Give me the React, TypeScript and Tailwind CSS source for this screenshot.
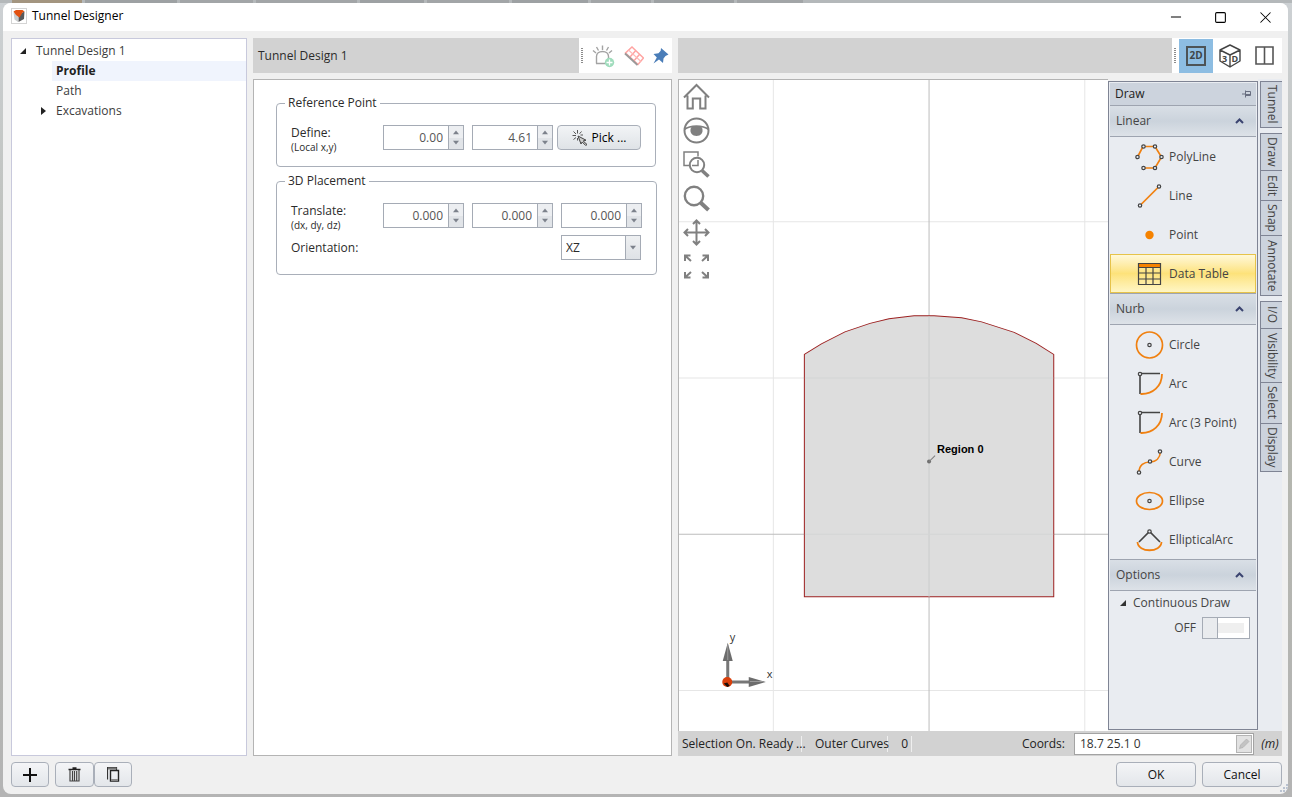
import type { ReactNode } from "react";
import { Minus, Square, X } from "lucide-react";

const ORANGE = "#f08010";
const INK = "#444444";

/** Small filled triangle used by spinners, drop-downs and tree nodes */
function Triangle({ points, className }: { points: string; className: string }) {
  return (
    <svg className={className} viewBox="0 0 8 8" aria-hidden="true">
      <polygon points={points} fill="currentColor" />
    </svg>
  );
}

/* ---------- Window frame ---------- */

const backdropTabs = [
  "w-[70px] bg-[#a39580]",
  "w-[92px] bg-[#9da1a3]",
  "w-[73px] bg-[#a2a5a7]",
  "w-[101px] bg-[#a2a5a7]",
  "w-[64px] bg-[#9da1a3]",
  "w-[82px] bg-[#a2a5a7]",
  "w-[76px] bg-[#9da1a3]",
  "w-[60px] bg-[#a2a5a7]",
  "w-[80px] bg-[#9da1a3]",
  "w-[66px] bg-[#a2a5a7]",
];

function BackdropStrip() {
  return (
    <div className="flex h-[3px] shrink-0 gap-[3px] bg-[#b4b8ba] pl-3">
      {backdropTabs.map((tab, i) => (
        <div className={tab} key={i} />
      ))}
    </div>
  );
}

function TitleBar() {
  return (
    <header className="flex h-7 shrink-0 items-center justify-between bg-white pl-2">
      <div className="flex items-center gap-[5px] pb-[2px]">
        <svg className="size-4" viewBox="0 0 16 16" aria-hidden="true">
          <rect x="0.5" y="0.5" width="15" height="15" fill="#fff" stroke="#d4d4d4" />
          <path d="M2.5 4 7 6v8L3.5 11.500z" fill="#c9cccd" />
          <path d="M13.500 3.500 7.500 6.500V14L13 11z" fill="#58595b" />
          <path d="M2.500 3.500 5 2h6.500l2 1.500-2 1L8.500 9.500 5 7z" fill="#e2500f" />
        </svg>
        <h1 className="text-xs text-black">Tunnel Designer</h1>
      </div>
      <div className="flex text-black">
        <button aria-label="Minimize" className="flex h-7 w-[45px] items-center justify-center" type="button">
          <Minus size={16} strokeWidth={1.5} />
        </button>
        <button aria-label="Maximize" className="flex h-7 w-[45px] items-center justify-center" type="button">
          <Square size={13} strokeWidth={2} />
        </button>
        <button aria-label="Close" className="flex h-7 w-[45px] items-center justify-center" type="button">
          <X size={19} strokeWidth={1.3} />
        </button>
      </div>
    </header>
  );
}

/* ---------- Tree ---------- */

function DesignTree() {
  return (
    <nav
      aria-label="Design tree"
      className="w-[236px] shrink-0 border border-[#c8c9dc] bg-white pt-px text-[#3c3c3c]"
    >
      <button className="flex h-[21px] w-full items-center gap-[9px] pl-[7px]" type="button">
        <Triangle className="size-2 text-[#222]" points="7,1 7,7 1,7" />
        Tunnel Design 1
      </button>
      <div className="pl-10">
        <button
          className="flex h-5 w-full items-center bg-[#f0f4fd] pl-1 font-bold text-[#222]"
          type="button"
        >
          Profile
        </button>
      </div>
      <button className="flex h-5 w-full items-center pl-11" type="button">
        Path
      </button>
      <button className="flex h-5 w-full items-center gap-2 pl-7" type="button">
        <Triangle className="size-2 text-[#222]" points="1,0 6,4 1,8" />
        Excavations
      </button>
    </nav>
  );
}

/* ---------- Properties ---------- */

function Grip() {
  return (
    <svg className="h-4 w-[2px] shrink-0" viewBox="0 0 2 16" aria-hidden="true">
      <path d="M1 0V16" stroke="#8c8c8c" strokeWidth="2" strokeDasharray="1 1" />
    </svg>
  );
}

function AddSupportIcon() {
  return (
    <svg className="h-6 w-[23px]" viewBox="0 0 23 24" fill="none" aria-hidden="true">
      <path d="M4.500 19.500V12.500C4.500 9.500 7 7.500 10.500 7.500S16.500 9.500 16.500 12.500V16M4 19.500h9" stroke="#a3a3a3" strokeWidth="1.400" />
      <path d="M1 6.500 4 9M4.500 3l2 3.500M10.500 1.500v4.500M16.500 3l-2 3.500M20 6.500 17 9" stroke="#a3a3a3" strokeWidth="1.400" />
      <circle cx="17.500" cy="18.500" r="4.700" fill="#9fdcbc" />
      <path d="M14.500 18.500h6M17.500 15.500v6" stroke="#fff" strokeWidth="1.300" />
    </svg>
  );
}

function BoltLayoutIcon() {
  return (
    <svg className="size-5" viewBox="0 0 20 20" fill="none" aria-hidden="true">
      <path d="M8 1 19.500 12 14 18.500 1.500 7zM11.800 4.600 6 11M15.600 8.300 10 14.800" stroke="#ffa3a1" strokeWidth="1.500" />
      <path d="M4.500 4 17 15.500" stroke="#ffb8b6" strokeWidth="1.100" />
      <path d="M1 7.500 13.500 19" stroke="#999" strokeWidth="1.800" />
    </svg>
  );
}

function PushPinIcon() {
  return (
    <svg className="size-4" viewBox="0 0 16 16" aria-hidden="true">
      <path d="M8 0 15.500 6.500 12.500 8 10.500 10.500 10 15 6 11.500 0.500 15.500 3.800 9.500 0.500 6 5.500 5.300 7.700 2.700z" fill="#4a7db8" />
    </svg>
  );
}

function NumberField({ label, value }: { label: string; value: string }) {
  return (
    <div className="flex h-[25px] w-[81px] border border-[#a5abb5] bg-white">
      <input
        aria-label={label}
        className="w-full min-w-0 pr-[5px] text-right text-[#555] outline-none"
        defaultValue={value}
        inputMode="decimal"
        type="text"
      />
      <div className="flex w-[15px] shrink-0 flex-col border-l border-[#a5abb5]">
        <button
          aria-label={`Increase ${label}`}
          className="flex flex-1 items-center justify-center bg-[#eceef1] text-[#7d828c]"
          type="button"
        >
          <Triangle className="size-[6px]" points="0,7 4,2 8,7" />
        </button>
        <button
          aria-label={`Decrease ${label}`}
          className="flex flex-1 items-center justify-center bg-[#e1e4e8] text-[#7d828c]"
          type="button"
        >
          <Triangle className="size-[6px]" points="0,1 8,1 4,6" />
        </button>
      </div>
    </div>
  );
}

function FieldCaption({ title, note }: { title: string; note: string }) {
  return (
    <div className="w-[84px] leading-[15px]">
      <div>{title}</div>
      <div className="text-[10px]">{note}</div>
    </div>
  );
}

function PropertiesPanel() {
  return (
    <section className="flex w-[419px] shrink-0 flex-col gap-[6px]">
      <div className="flex h-[35px] bg-[#d2d2d2]">
        <h2 className="flex flex-1 items-center pl-[5px]">Tunnel Design 1</h2>
        <div className="flex w-[93px] items-center gap-[9px] bg-white pl-[2px]">
          <Grip />
          <button aria-label="Add support" type="button">
            <AddSupportIcon />
          </button>
          <button aria-label="Bolt layout" type="button">
            <BoltLayoutIcon />
          </button>
          <button aria-label="Pin panel" type="button">
            <PushPinIcon />
          </button>
        </div>
      </div>

      <div className="flex flex-1 flex-col gap-[6px] border border-[#b4b4b4] bg-white px-[22px] pt-[15px]">
        <fieldset className="rounded border border-[#a9afb9] px-[14px] pt-[14px] pb-[11px]">
          <legend className="-ml-[6px] px-[3px] leading-4">Reference Point</legend>
          <div className="flex items-start gap-2">
            <FieldCaption note="(Local x,y)" title="Define:" />
            <NumberField label="Local x" value="0.00" />
            <div className="flex gap-1">
              <NumberField label="Local y" value="4.61" />
              <button
                className="flex h-[25px] w-[84px] items-center justify-center gap-1 rounded border border-[#a9afb9] bg-linear-to-b from-[#f2f4f6] to-[#dfe3e7] text-black"
                type="button"
              >
                <svg className="size-4" viewBox="0 0 16 16" fill="none" aria-hidden="true">
                  <path d="M6 6 14 10.200 11.200 11 15 14.500 13.700 15.500 10.200 12 9 14z" fill="#ccc" stroke="#444" />
                  <path d="M5.500 0v3.500M0.500 5.500h3.500M1.500 1.500 4 4M9.500 1.500 7.500 3.800M1.500 9.500 4 7.500M11 5H8.500M5.500 10.500V8" stroke="#555" />
                </svg>
                Pick ...
              </button>
            </div>
          </div>
        </fieldset>

        <fieldset className="rounded border border-[#a9afb9] px-[14px] pt-[14px] pb-[14px]">
          <legend className="-ml-[6px] px-[3px] leading-4">3D Placement</legend>
          <div className="flex items-start gap-2">
            <FieldCaption note="(dx, dy, dz)" title="Translate:" />
            <NumberField label="dx" value="0.000" />
            <NumberField label="dy" value="0.000" />
            <NumberField label="dz" value="0.000" />
          </div>
          <div className="mt-[2px] flex items-center">
            <label className="w-[270px]" htmlFor="orientation">
              Orientation:
            </label>
            <div className="relative">
              <select
                className="h-[25px] w-20 appearance-none border border-[#a5abb5] bg-white pl-1"
                defaultValue="XZ"
                id="orientation"
              >
                <option>XY</option>
                <option>XZ</option>
                <option>YZ</option>
              </select>
              <span className="pointer-events-none absolute inset-y-px right-px flex w-[15px] items-center justify-center border-l border-[#a5abb5] bg-linear-to-b from-[#eef0f2] to-[#dfe2e6] text-[#7d828c]">
                <Triangle className="size-[6px]" points="0,1 8,1 4,6" />
              </span>
            </div>
          </div>
        </fieldset>
      </div>
    </section>
  );
}

/* ---------- Viewport ---------- */

const viewTools: { label: string; icon: ReactNode }[] = [
  {
    label: "Home view",
    icon: <path d="M1 14.500 13.500 2 26 14.500M4.500 12.500V25.500H9.800V15.500h7.400V25.500h5.300V12.500" strokeWidth="2" />,
  },
  {
    label: "Visibility",
    icon: (
      <>
        <circle cx="13.500" cy="13.500" r="12" strokeWidth="2" />
        <path d="M1.500 12.500C7 8 20 8 25.500 12.500" strokeWidth="1.600" />
        <path d="M8 10.500C10 9.300 17 9.300 19 10.500 21 16 17.500 19 13.500 19S6 16 8 10.500z" fill="#808080" stroke="none" />
      </>
    ),
  },
  {
    label: "Zoom window",
    icon: (
      <>
        <path d="M6.500 14.500H1V1H15V5.500M9 14.500h6V9" strokeWidth="1.500" />
        <circle cx="14" cy="14" r="7.200" strokeWidth="2" />
        <path d="M19 19.500 25.500 25.500" strokeWidth="3.600" />
      </>
    ),
  },
  {
    label: "Zoom",
    icon: (
      <>
        <circle cx="11" cy="11" r="9.200" strokeWidth="2.400" />
        <path d="M17.500 17.500 25.500 25" strokeWidth="4" />
      </>
    ),
  },
  {
    label: "Pan",
    icon: (
      <path d="M13.500 1.500V25.500M1.500 13.500H25.500M10 5 13.500 1.500 17 5M10 22l3.500 3.500L17 22M5 10 1.500 13.500 5 17M22 10l3.500 3.500L22 17" strokeWidth="2" />
    ),
  },
  {
    label: "Zoom extents",
    icon: (
      <path d="M8 8 2.500 3M2 8V2.500H7.500M19 8 24.500 3M19.500 2.500H25V8M8 19 2.500 24M2 19V24.500H7.500M19 19l5.500 5M19.500 24.500H25V19" strokeWidth="2" />
    ),
  },
];

function TunnelProfile() {
  return (
    <svg
      className="absolute inset-0 size-full"
      preserveAspectRatio="xMidYMin slice"
      viewBox="0 1 429 650"
      role="img"
      aria-label="Tunnel profile"
    >
      <path d="M94.500 0V652M405.500 0V652M0 142.500H429M0 298.500H429M0 610.500H429" stroke="#e6e6e6" />
      <path d="M250 0V652M0 454.500H429" stroke="#bdbdbd" />
      <path
        d="M125.500 275 142.500 264.500 166 252.500 191 244 210 239.500 235 236.500H255L282.500 238.500 302.500 242.500 335 253 357 264 374.500 275V517H125.500z"
        fill="#dddddd"
        stroke="#9c2020"
      />
      <path d="M250 237V517" stroke="#cbcdcd" />
      <path d="M126 298.500H374M126 454.500H374" stroke="#d3d5d5" />
      <circle cx="250" cy="382" r="2" fill="#6f6f6f" />
      <path d="M250 382l6-6" stroke="#808080" />
      <text className="font-['Liberation_Sans',sans-serif] text-[11px] font-bold" fill="#000" x="258" y="373">
        Region 0
      </text>
      {/* axis triad */}
      <path d="M47.500 577h3v24h-3zM50 600.500h24v3H50z" fill="#777" />
      <path d="M49 563 54 581H44z" fill="#6d6d6d" />
      <path d="M87 602 70 607V597z" fill="#6d6d6d" />
      <path d="M49 565v15M84 601.500H71" stroke="#999" />
      <circle cx="48.500" cy="602" r="5" fill="#d9400c" />
      <path d="M45 603.500l3.500-1 2.500 3.500-2.500 1z" fill="#1c0d08" />
      <text className="text-[11px]" fill="#333" x="51" y="561">
        y
      </text>
      <text className="text-[11px]" fill="#333" x="88" y="598">
        x
      </text>
    </svg>
  );
}

function Viewport() {
  return (
    <div className="relative min-w-0 flex-1 overflow-hidden border-t border-l border-[#b4b4b4] bg-white">
      <TunnelProfile />
      <div className="relative flex w-[35px] flex-col items-center gap-[7px] pt-[3px]">
        {viewTools.map((tool) => (
          <button aria-label={tool.label} key={tool.label} type="button">
            <svg className="size-[27px]" viewBox="0 0 27 27" fill="none" stroke="#808080">
              {tool.icon}
            </svg>
          </button>
        ))}
      </div>
    </div>
  );
}

/* ---------- Draw panel ---------- */

type DrawTool = { label: string; icon: ReactNode; active?: boolean };

const node = { r: 1.7, fill: "#e9ecf1", stroke: INK, strokeWidth: 1.2 };

const arcIcon = (
  <>
    <path d="M5 3.500H25M5 3.500V24" stroke={INK} strokeWidth="1.600" />
    <path d="M27 4C27 16 18 24.500 5.500 24" stroke={ORANGE} strokeWidth="1.800" />
    <circle cx="5" cy="4" {...node} />
  </>
);

const linearTools: DrawTool[] = [
  {
    label: "PolyLine",
    icon: (
      <>
        <path d="M2.500 14 8 3.500H20L26.500 14 20 25H8" stroke={ORANGE} strokeWidth="1.700" />
        <circle cx="2.500" cy="14" {...node} />
        <circle cx="8.500" cy="3.500" {...node} />
        <circle cx="20" cy="3.500" {...node} />
        <circle cx="26.500" cy="14" {...node} />
        <circle cx="20" cy="25" {...node} />
        <circle cx="8.500" cy="25" {...node} />
      </>
    ),
  },
  {
    label: "Line",
    icon: (
      <>
        <path d="M5 23.500 24 4.500" stroke={ORANGE} strokeWidth="1.700" />
        <circle cx="5" cy="23.500" {...node} />
        <circle cx="24" cy="4.500" {...node} />
      </>
    ),
  },
  { label: "Point", icon: <circle cx="14.500" cy="14" r="4.200" fill="#f58200" /> },
  {
    label: "Data Table",
    active: true,
    icon: (
      <>
        <rect x="3.500" y="3" width="22" height="4" fill="#f58200" />
        <path d="M3.500 3.500H25.500V24.500H3.500zM3.500 7.500h22M3.500 13h22M3.500 19h22M11 7.500v17M18 7.500v17" stroke={INK} strokeWidth="1.200" />
      </>
    ),
  },
];

const nurbTools: DrawTool[] = [
  {
    label: "Circle",
    icon: (
      <>
        <circle cx="14.500" cy="14" r="13" stroke={ORANGE} strokeWidth="1.700" />
        <circle cx="14.500" cy="14" {...node} />
      </>
    ),
  },
  { label: "Arc", icon: arcIcon },
  { label: "Arc (3 Point)", icon: arcIcon },
  {
    label: "Curve",
    icon: (
      <>
        <path d="M4 24.500C4 17 9 14 15 14S25 10 25.500 3.500" stroke={ORANGE} strokeWidth="1.700" />
        <circle cx="4" cy="24.500" {...node} />
        <circle cx="15" cy="13.500" {...node} />
        <circle cx="25" cy="3.500" {...node} />
      </>
    ),
  },
  {
    label: "Ellipse",
    icon: (
      <>
        <ellipse cx="14.500" cy="14" rx="13" ry="8.500" stroke={ORANGE} strokeWidth="1.700" />
        <circle cx="14.500" cy="14" {...node} />
      </>
    ),
  },
  {
    label: "EllipticalArc",
    icon: (
      <>
        <path d="M4 16 14.500 5.500 25 16" stroke={INK} strokeWidth="1.600" />
        <path d="M2.500 16C3 27 26 27 26.500 16" stroke={ORANGE} strokeWidth="1.800" />
        <circle cx="14.500" cy="5.500" {...node} />
      </>
    ),
  },
];

function GroupHeader({ title }: { title: string }) {
  return (
    <button
      className="flex h-8 w-full items-center justify-between border-y border-[#9ea4b0] bg-linear-to-b from-[#d9dfe6] via-[#cbd3dc] to-[#dde2e8] pr-3 pl-[6px]"
      type="button"
    >
      {title}
      <svg className="h-[6px] w-[9px]" viewBox="0 0 9 6" fill="none" aria-hidden="true">
        <path d="M1 5 4.500 1.500 8 5" stroke="#3b4470" strokeWidth="2" />
      </svg>
    </button>
  );
}

function ToolList({ tools }: { tools: DrawTool[] }) {
  return (
    <ul>
      {tools.map((tool) => (
        <li key={tool.label}>
          <button
            aria-pressed={tool.active ?? false}
            className={
              tool.active
                ? "flex h-[39px] w-full items-center gap-[5px] border border-[#e6c34a] bg-linear-to-b from-[#fff8d8] via-[#fde27a] to-[#fff6c4] pl-6"
                : "flex h-[39px] w-full items-center gap-[5px] border border-transparent pl-6"
            }
            type="button"
          >
            <svg className="h-7 w-[29px] shrink-0" viewBox="0 0 29 28" fill="none" aria-hidden="true">
              {tool.icon}
            </svg>
            {tool.label}
          </button>
        </li>
      ))}
    </ul>
  );
}

function DrawPanel() {
  return (
    <aside className="mt-[2px] mb-px w-[150px] shrink-0 border border-[#7f8494] bg-[#e9ecf1] p-px text-[#444]">
      <div className="flex h-[22px] items-center justify-between bg-[#ccd3dd] pr-[5px] pl-[5px] text-[#222]">
        Draw
        <button aria-label="Auto-hide" type="button">
          <svg className="h-2 w-[9px]" viewBox="0 0 9 8" fill="none" aria-hidden="true">
            <path d="M0 4H3M3.500 0.500V7.500M4 1.500H8.500V5.500H4M4 4.500h4.500" stroke="#686e80" />
          </svg>
        </button>
      </div>
      <GroupHeader title="Linear" />
      <ToolList tools={linearTools} />
      <GroupHeader title="Nurb" />
      <ToolList tools={nurbTools} />
      <GroupHeader title="Options" />
      <div className="flex h-6 items-center gap-[6px] pl-[9px]">
        <Triangle className="size-2 text-[#333]" points="7,1 7,7 1,7" />
        Continuous Draw
      </div>
      <div className="flex items-center justify-end gap-[6px] pt-[2px] pr-[6px]">
        <span id="continuous-draw">OFF</span>
        <button
          aria-checked="false"
          aria-labelledby="continuous-draw"
          className="flex h-[22px] w-12 border border-[#a5abb5] bg-white"
          role="switch"
          type="button"
        >
          <span className="h-full w-[15px] border-r border-[#a5abb5] bg-[#e9ebee]" />
          <span className="my-[5px] h-[10px] w-[26px] bg-[#efefef]" />
        </button>
      </div>
    </aside>
  );
}

/* ---------- Side tabs ---------- */

const sideTabs = [
  [{ label: "Tunnel", height: "h-[47px]" }],
  [
    { label: "Draw", height: "h-[38px]" },
    { label: "Edit", height: "h-[31px]" },
    { label: "Snap", height: "h-[36px]" },
    { label: "Annotate", height: "h-[61px]" },
  ],
  [
    { label: "I/O", height: "h-[28px]" },
    { label: "Visibility", height: "h-[55px]" },
    { label: "Select", height: "h-[42px]" },
    { label: "Display", height: "h-[49px]" },
  ],
];

function SideTabs() {
  return (
    <div className="flex w-6 shrink-0 flex-col gap-[5px] bg-[#e9ecf1] pt-[2px] pl-[2px] text-[#444]">
      {sideTabs.map((group) => (
        <div className="flex flex-col -space-y-px" key={group[0].label}>
          {group.map((tab) => (
            <button
              className={`${tab.height} flex w-[22px] items-center justify-center border-y border-l border-[#7f8494] bg-[#ccd3dd]`}
              key={tab.label}
              type="button"
            >
              <span className="[writing-mode:vertical-rl]">{tab.label}</span>
            </button>
          ))}
        </div>
      ))}
    </div>
  );
}

/* ---------- Right hand side ---------- */

function ViewSwitch() {
  return (
    <div className="flex w-[110px] items-center bg-white pl-[2px]">
      <Grip />
      <button
        aria-label="2D view"
        aria-pressed="true"
        className="ml-[3px] flex h-[34px] w-[34px] items-center justify-center bg-[#8dbde2]"
        type="button"
      >
        <span className="flex size-5 items-center justify-center border-2 border-[#4d5356] text-[10px] font-bold text-[#3f4648]">
          2D
        </span>
      </button>
      <button aria-label="3D view" className="flex h-[34px] w-[34px] items-center justify-center" type="button">
        <svg className="h-6 w-[22px]" viewBox="0 0 22 24" fill="none" aria-hidden="true">
          <path d="M11 1 21 6V17L11 23 1 17V6zM1 6l10 5 10-5M11 11V23" stroke="#444" strokeWidth="1.400" strokeLinejoin="round" />
          <text className="text-[9px] font-bold" fill="#444" x="3" y="17.500">
            3
          </text>
          <text className="text-[9px] font-bold" fill="#444" x="12.500" y="17.500">
            D
          </text>
        </svg>
      </button>
      <button aria-label="Split view" className="flex h-[34px] w-[34px] items-center justify-center" type="button">
        <svg className="h-[19px] w-[19px]" viewBox="0 0 19 19" fill="none" aria-hidden="true">
          <path d="M1 1H18V18H1zM9.500 1V18" stroke="#555" strokeWidth="1.600" />
        </svg>
      </button>
    </div>
  );
}

function StatusBar() {
  return (
    <div className="flex h-[25px] shrink-0 items-center bg-[#d2d2d2] text-[#222]">
      <span className="w-[124px] border-r border-[#efefef] pl-1 whitespace-nowrap">Selection On. Ready ...</span>
      <span className="w-[86px] border-r border-[#efefef] pl-[13px] whitespace-nowrap">Outer Curves</span>
      <span className="w-6 border-r border-[#efefef] pr-[3px] text-right">0</span>
      <label className="ml-auto pr-[9px]" htmlFor="coords">
        Coords:
      </label>
      <div className="flex h-[22px] w-[180px] border border-[#a3a3a3] bg-white">
        <input
          className="min-w-0 flex-1 pl-[5px] text-[#333] outline-none"
          defaultValue="18.7 25.1 0"
          id="coords"
          type="text"
        />
        <button
          aria-label="Edit coordinates"
          className="m-px flex w-4 items-center justify-center border border-[#b4b4b4] bg-[#e2e2e2]"
          type="button"
        >
          <svg className="size-[11px]" viewBox="0 0 11 11" aria-hidden="true">
            <path d="M0.500 10.500 1.500 7 7.500 1 10 3.500 4 9.500z" fill="#c3c3c3" stroke="#aaa" strokeWidth="0.600" />
          </svg>
        </button>
      </div>
      <span className="w-7 pl-1 text-center italic">(m)</span>
    </div>
  );
}

function DesignView() {
  return (
    <section className="flex min-w-0 flex-1 flex-col">
      <div className="flex h-[35px] shrink-0 justify-end bg-[#d2d2d2]">
        <ViewSwitch />
      </div>
      <div className="mt-[6px] flex min-h-0 flex-1">
        <Viewport />
        <DrawPanel />
        <SideTabs />
      </div>
      <StatusBar />
    </section>
  );
}

/* ---------- Footer ---------- */

const buttonFace =
  "flex h-[25px] items-center justify-center rounded border border-[#a9afb9] bg-linear-to-b from-[#f4f5f7] to-[#e3e6ea] text-[#111]";

function Footer() {
  return (
    <footer className="relative flex h-8 shrink-0 justify-between px-2 pr-[6px]">
      <div className="flex">
        <button aria-label="Add" className={`${buttonFace} mr-[6px] w-[38px]`} type="button">
          <svg className="size-[14px]" viewBox="0 0 14 14" aria-hidden="true">
            <path d="M7 0V14M0 7H14" stroke="#111" strokeWidth="2" />
          </svg>
        </button>
        <button aria-label="Delete" className={`${buttonFace} w-[39px]`} type="button">
          <svg className="h-[15px] w-[13px]" viewBox="0 0 13 15" fill="none" aria-hidden="true">
            <path d="M0.500 2.500h12M4.500 1h4" stroke="#222" strokeWidth="1.600" />
            <path d="M2 3V14H11V3M4.500 4v10M6.500 4v10M8.700 4v10" stroke="#444" strokeWidth="1.200" />
          </svg>
        </button>
        <button aria-label="Duplicate" className={`${buttonFace} w-[38px]`} type="button">
          <svg className="h-[15px] w-[13px]" viewBox="0 0 13 15" fill="none" aria-hidden="true">
            <path d="M0.500 12.500V0.500H9.500V3" stroke="#333" strokeWidth="1.200" />
            <path d="M1 1.500H9.500" stroke="#777" strokeWidth="2" />
            <path d="M3.500 3.500H11.500V14H3.500z" stroke="#222" strokeWidth="1.400" />
            <path d="M4 13H11" stroke="#888" strokeWidth="2" />
          </svg>
        </button>
      </div>
      <div className="flex gap-[6px]">
        <button className={`${buttonFace} w-20`} type="button">
          OK
        </button>
        <button className={`${buttonFace} w-20`} type="button">
          Cancel
        </button>
      </div>
      <svg className="absolute right-0 bottom-0 size-[11px]" viewBox="0 0 11 11" aria-hidden="true">
        <path d="M9 1h2v2H9zM6 4h2v2H6zM9 4h2v2H9zM3 7h2v2H3zM6 7h2v2H6zM9 7h2v2H9z" fill="#b9c2d0" />
      </svg>
    </footer>
  );
}

export default function App() {
  return (
    <div className="flex h-screen flex-col overflow-hidden bg-linear-to-b from-[#cdd1d4] via-[#b5b7ae] to-[#b4b4b4] font-['Segoe_UI','Open_Sans',sans-serif] text-xs text-[#2b2b2b]">
      <BackdropStrip />
      <div className="mr-1 mb-[3px] ml-[3px] flex min-h-0 flex-1 flex-col overflow-hidden rounded-lg bg-[#f0f0f0]">
        <TitleBar />
        <main className="flex min-h-0 flex-1 gap-[6px] pt-[7px] pr-[6px] pb-[6px] pl-2">
          <DesignTree />
          <PropertiesPanel />
          <DesignView />
        </main>
        <Footer />
      </div>
    </div>
  );
}
